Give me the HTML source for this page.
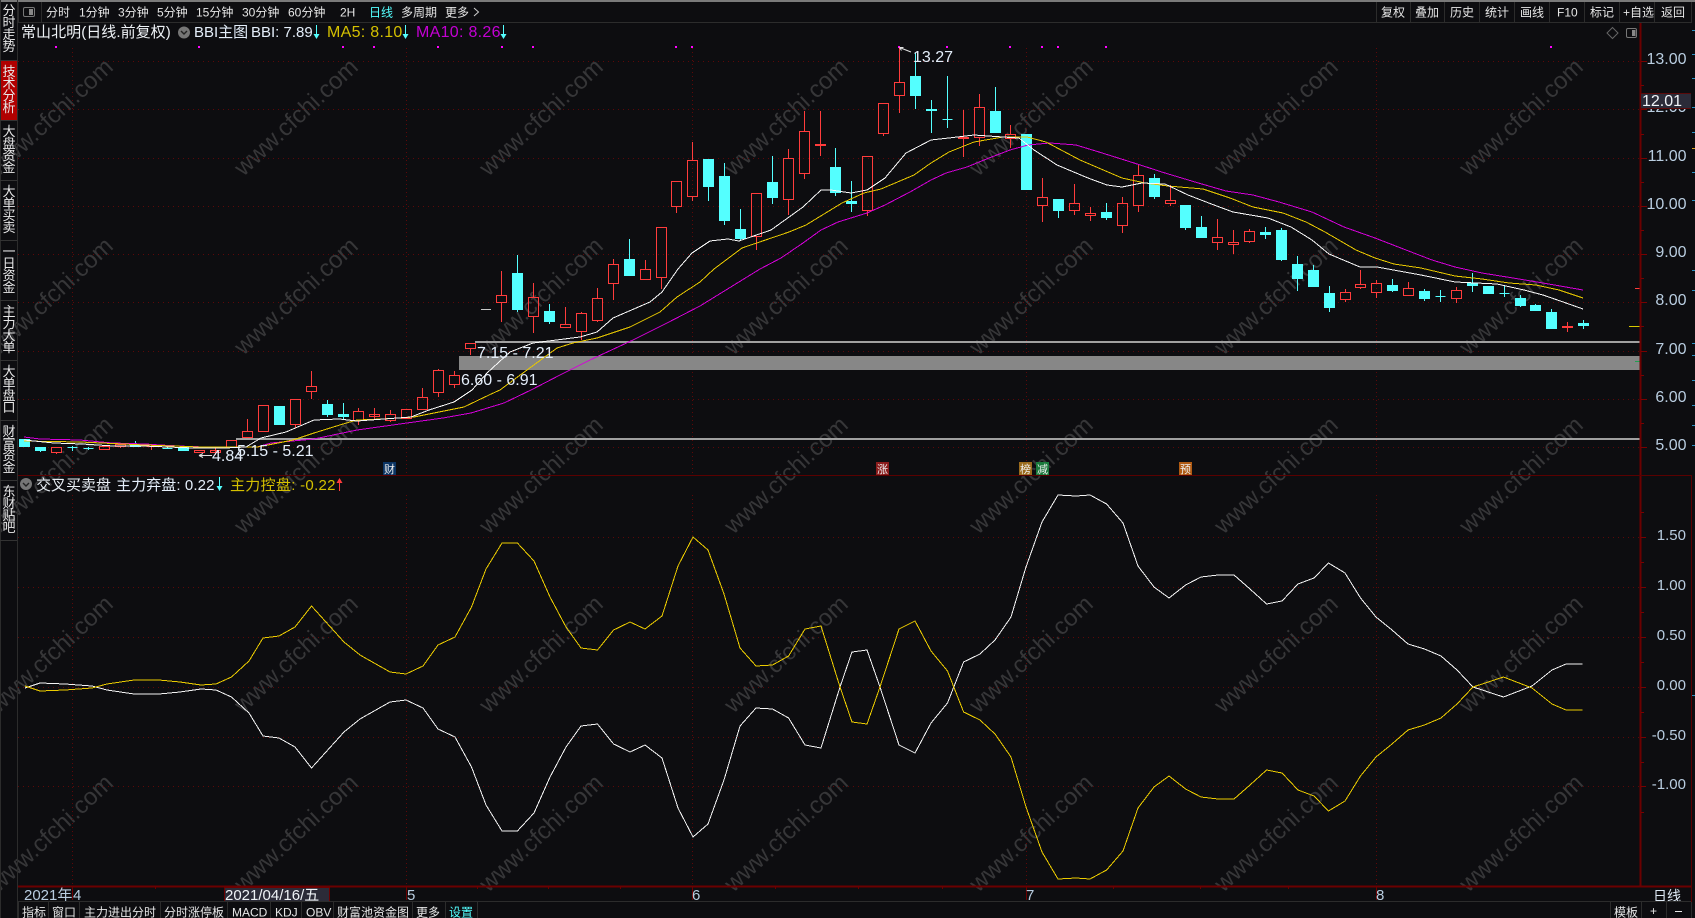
<!DOCTYPE html>
<html lang="zh"><head><meta charset="utf-8"><title>常山北明</title>
<style>
html,body{margin:0;padding:0;background:#0d0d10;width:1695px;height:918px;overflow:hidden}
svg{position:absolute;left:0;top:0;display:block}
svg text{font-family:"Liberation Sans","Noto Sans CJK SC",sans-serif}
.s{position:absolute;left:2px;width:14px;font:13px/12px "Liberation Sans","Noto Sans CJK SC",sans-serif;color:#e8e8e8;word-break:break-all;text-align:center}
.b{font-size:12px;fill:#e6e6e6}
.t{font-size:16px;fill:#e4eefa}
.a{font-size:16px;fill:#b9cde0;text-anchor:end}
.l{font-size:15px;fill:#b9cde0;text-anchor:end}
.w{font-size:24px;fill:#363638;text-anchor:middle}
polyline{shape-rendering:crispEdges}
</style></head><body>
<svg width="1695" height="918" viewBox="0 0 1695 918" xmlns="http://www.w3.org/2000/svg">
<rect width="1695" height="918" fill="#0d0d10"/>
<!-- watermarks -->
<g>
<text class="w" x="51" y="125" transform="rotate(-43 51 117)">www.cfchi.com</text>
<text class="w" x="296" y="125" transform="rotate(-43 296 117)">www.cfchi.com</text>
<text class="w" x="541" y="125" transform="rotate(-43 541 117)">www.cfchi.com</text>
<text class="w" x="786" y="125" transform="rotate(-43 786 117)">www.cfchi.com</text>
<text class="w" x="1031" y="125" transform="rotate(-43 1031 117)">www.cfchi.com</text>
<text class="w" x="1276" y="125" transform="rotate(-43 1276 117)">www.cfchi.com</text>
<text class="w" x="1521" y="125" transform="rotate(-43 1521 117)">www.cfchi.com</text>
<text class="w" x="51" y="304" transform="rotate(-43 51 296)">www.cfchi.com</text>
<text class="w" x="296" y="304" transform="rotate(-43 296 296)">www.cfchi.com</text>
<text class="w" x="541" y="304" transform="rotate(-43 541 296)">www.cfchi.com</text>
<text class="w" x="786" y="304" transform="rotate(-43 786 296)">www.cfchi.com</text>
<text class="w" x="1031" y="304" transform="rotate(-43 1031 296)">www.cfchi.com</text>
<text class="w" x="1276" y="304" transform="rotate(-43 1276 296)">www.cfchi.com</text>
<text class="w" x="1521" y="304" transform="rotate(-43 1521 296)">www.cfchi.com</text>
<text class="w" x="51" y="483" transform="rotate(-43 51 475)">www.cfchi.com</text>
<text class="w" x="296" y="483" transform="rotate(-43 296 475)">www.cfchi.com</text>
<text class="w" x="541" y="483" transform="rotate(-43 541 475)">www.cfchi.com</text>
<text class="w" x="786" y="483" transform="rotate(-43 786 475)">www.cfchi.com</text>
<text class="w" x="1031" y="483" transform="rotate(-43 1031 475)">www.cfchi.com</text>
<text class="w" x="1276" y="483" transform="rotate(-43 1276 475)">www.cfchi.com</text>
<text class="w" x="1521" y="483" transform="rotate(-43 1521 475)">www.cfchi.com</text>
<text class="w" x="51" y="662" transform="rotate(-43 51 654)">www.cfchi.com</text>
<text class="w" x="296" y="662" transform="rotate(-43 296 654)">www.cfchi.com</text>
<text class="w" x="541" y="662" transform="rotate(-43 541 654)">www.cfchi.com</text>
<text class="w" x="786" y="662" transform="rotate(-43 786 654)">www.cfchi.com</text>
<text class="w" x="1031" y="662" transform="rotate(-43 1031 654)">www.cfchi.com</text>
<text class="w" x="1276" y="662" transform="rotate(-43 1276 654)">www.cfchi.com</text>
<text class="w" x="1521" y="662" transform="rotate(-43 1521 654)">www.cfchi.com</text>
<text class="w" x="51" y="841" transform="rotate(-43 51 833)">www.cfchi.com</text>
<text class="w" x="296" y="841" transform="rotate(-43 296 833)">www.cfchi.com</text>
<text class="w" x="541" y="841" transform="rotate(-43 541 833)">www.cfchi.com</text>
<text class="w" x="786" y="841" transform="rotate(-43 786 833)">www.cfchi.com</text>
<text class="w" x="1031" y="841" transform="rotate(-43 1031 833)">www.cfchi.com</text>
<text class="w" x="1276" y="841" transform="rotate(-43 1276 833)">www.cfchi.com</text>
<text class="w" x="1521" y="841" transform="rotate(-43 1521 833)">www.cfchi.com</text>
</g>
<!-- grid -->
<path d="M18 61.5H1640M18 109.5H1640M18 158.5H1640M18 206.5H1640M18 254.5H1640M18 302.5H1640M18 351.5H1640M18 399.5H1640M18 447.5H1640M18 537.5H1640M18 587.5H1640M18 637.5H1640M18 687.5H1640M18 737.5H1640M18 786.5H1640" stroke="#5e0808" stroke-dasharray="1 4" fill="none"/>
<path d="M72.5 48V475M406.5 48V475M692.5 48V475M1026.5 48V475M1376.5 48V475M72.5 495V886M406.5 495V886M692.5 495V886M1026.5 495V886M1376.5 495V886" stroke="#5e0808" stroke-dasharray="1 3" fill="none"/>
<!-- magenta dots -->
<path d="M55 46h2v2h-2zM198 46h2v2h-2zM342 46h2v2h-2zM373 46h2v2h-2zM437 46h2v2h-2zM501 46h2v2h-2zM532 46h2v2h-2zM675 46h2v2h-2zM691 46h2v2h-2zM898 46h2v2h-2zM946 46h2v2h-2zM1009 46h2v2h-2zM1041 46h2v2h-2zM1057 46h2v2h-2zM1105 46h2v2h-2zM1550 46h2v2h-2z" fill="#ff00ff"/>
<!-- red candles -->
<path shape-rendering="crispEdges" fill="none" stroke="#ff3c3c" d="M56.5 452.5V454M51.5 447.5H61.5V452.5H51.5Z
M99.5 446.5H109.5V449.5H99.5Z
M120.5 446.5V448M115.5 444.5H125.5V446.5H115.5Z
M151.5 445V450M146.5 446.5H156.5
M194.5 450.5H204.5V452.5H194.5Z
M215.5 448V455M210.5 450.5H220.5V452.5H210.5Z
M226.5 440.5H236.5V447.5H226.5Z
M247.5 419V431.5M242.5 431.5H252.5V437.5H242.5Z
M258.5 405.5H268.5V431.5H258.5Z
M295.5 424.5V428M290.5 399.5H300.5V424.5H290.5Z
M311.5 371V386.5M311.5 391.5V399M306.5 386.5H316.5V391.5H306.5Z
M358.5 408V411.5M358.5 420.5V425M353.5 411.5H363.5V420.5H353.5Z
M374.5 408V420M369.5 414.5H379.5V416.5H369.5Z
M390.5 410V414.5M390.5 420.5V422M385.5 414.5H395.5V420.5H385.5Z
M401.5 409.5H411.5V418.5H401.5Z
M422.5 388V397.5M417.5 397.5H427.5V409.5H417.5Z
M438.5 369V370.5M438.5 392.5V397M433.5 370.5H443.5V392.5H433.5Z
M454.5 371V375.5M454.5 384.5V388M449.5 375.5H459.5V384.5H449.5Z
M470.5 348.5V355M465.5 343.5H475.5V348.5H465.5Z
M501.5 271V295.5M501.5 302.5V322M496.5 295.5H506.5V302.5H496.5Z
M533.5 283V297.5M533.5 316.5V333M528.5 297.5H538.5V316.5H528.5Z
M565.5 307V324.5M565.5 327.5V328M560.5 324.5H570.5V327.5H560.5Z
M581.5 312V313.5M581.5 331.5V340M576.5 313.5H586.5V331.5H576.5Z
M597.5 288V298.5M597.5 320.5V322M592.5 298.5H602.5V320.5H592.5Z
M613.5 259V264.5M613.5 283.5V300M608.5 264.5H618.5V283.5H608.5Z
M645.5 260V269.5M640.5 269.5H650.5V279.5H640.5Z
M661.5 277.5V289M656.5 227.5H666.5V277.5H656.5Z
M676.5 206.5V213M671.5 181.5H681.5V206.5H671.5Z
M692.5 142V160.5M692.5 196.5V201M687.5 160.5H697.5V196.5H687.5Z
M756.5 236.5V250M751.5 193.5H761.5V236.5H751.5Z
M788.5 149V158.5M788.5 199.5V215M783.5 158.5H793.5V199.5H783.5Z
M804.5 111V131.5M804.5 173.5V179M799.5 131.5H809.5V173.5H799.5Z
M820.5 111V156M815.5 144.5H825.5V145.5H815.5Z
M867.5 210.5V216M862.5 156.5H872.5V210.5H862.5Z
M883.5 133.5V136M878.5 103.5H888.5V133.5H878.5Z
M899.5 47V82.5M899.5 95.5V113M894.5 82.5H904.5V95.5H894.5Z
M963.5 110V157M958.5 137.5H968.5V138.5H958.5Z
M979.5 94V107.5M979.5 137.5V146M974.5 107.5H984.5V137.5H974.5Z
M1010.5 125V134.5M1010.5 138.5V148M1005.5 134.5H1015.5V138.5H1005.5Z
M1042.5 178V197.5M1042.5 205.5V222M1037.5 197.5H1047.5V205.5H1037.5Z
M1074.5 184V203.5M1074.5 210.5V215M1069.5 203.5H1079.5V210.5H1069.5Z
M1090.5 207V213.5M1090.5 215.5V221M1085.5 213.5H1095.5V215.5H1085.5Z
M1122.5 197V203.5M1122.5 225.5V233M1117.5 203.5H1127.5V225.5H1117.5Z
M1138.5 164V175.5M1138.5 205.5V212M1133.5 175.5H1143.5V205.5H1133.5Z
M1170.5 185V200.5M1170.5 203.5V206M1165.5 200.5H1175.5V203.5H1165.5Z
M1217.5 219V237.5M1217.5 242.5V250M1212.5 237.5H1222.5V242.5H1212.5Z
M1233.5 230V242.5M1233.5 244.5V254M1228.5 242.5H1238.5V244.5H1228.5Z
M1249.5 229V231.5M1249.5 241.5V243M1244.5 231.5H1254.5V241.5H1244.5Z
M1345.5 289V292.5M1345.5 299.5V302M1340.5 292.5H1350.5V299.5H1340.5Z
M1360.5 270V284.5M1360.5 287.5V289M1355.5 284.5H1365.5V287.5H1355.5Z
M1376.5 280V283.5M1376.5 292.5V298M1371.5 283.5H1381.5V292.5H1371.5Z
M1408.5 282V288.5M1403.5 288.5H1413.5V295.5H1403.5Z
M1456.5 287V290.5M1456.5 298.5V303M1451.5 290.5H1461.5V298.5H1451.5Z
M1567.5 322V332M1562.5 326.5H1572.5V327.5H1562.5Z"/>
<!-- cyan candles -->
<path shape-rendering="crispEdges" fill="#54ffff" stroke="#54ffff" d="M19.5 439.5H29.5V446.5H19.5Z
M40.5 447V452M35.5 447.5H45.5V450.5H35.5Z
M72.5 446V451M67.5 447.5H77.5
M88.5 447V450M83.5 448.5H93.5
M135.5 441V447M130.5 444.5H140.5V446.5H130.5Z
M167.5 446V449M162.5 448.5H172.5
M178.5 447.5H188.5V450.5H178.5Z
M279.5 424.5V425M274.5 406.5H284.5V424.5H274.5Z
M327.5 400V417M322.5 404.5H332.5V414.5H322.5Z
M343.5 403V419M338.5 414.5H348.5V416.5H338.5Z
M517.5 255V312M512.5 273.5H522.5V309.5H512.5Z
M549.5 304V324M544.5 311.5H554.5V321.5H544.5Z
M629.5 239V276M624.5 259.5H634.5V275.5H624.5Z
M708.5 186.5V201M703.5 159.5H713.5V186.5H703.5Z
M724.5 163V225M719.5 176.5H729.5V220.5H719.5Z
M740.5 209V241M735.5 229.5H745.5V238.5H735.5Z
M772.5 156V204M767.5 182.5H777.5V197.5H767.5Z
M835.5 148V196M830.5 167.5H840.5V192.5H830.5Z
M851.5 181V212M846.5 201.5H856.5V203.5H846.5Z
M915.5 53V109M910.5 76.5H920.5V95.5H910.5Z
M931.5 100V133M926.5 109.5H936.5V110.5H926.5Z
M947.5 76V128M942.5 119.5H952.5
M995.5 87V133M990.5 111.5H1000.5V132.5H990.5Z
M1021.5 134.5H1031.5V189.5H1021.5Z
M1058.5 199.5V218M1053.5 199.5H1063.5V210.5H1053.5Z
M1106.5 203V220M1101.5 212.5H1111.5V217.5H1101.5Z
M1154.5 174V199M1149.5 178.5H1159.5V196.5H1149.5Z
M1185.5 227.5V230M1180.5 205.5H1190.5V227.5H1180.5Z
M1201.5 216V238M1196.5 227.5H1206.5V237.5H1196.5Z
M1265.5 227V239M1260.5 232.5H1270.5V234.5H1260.5Z
M1281.5 228V261M1276.5 230.5H1286.5V259.5H1276.5Z
M1297.5 256V291M1292.5 264.5H1302.5V278.5H1292.5Z
M1313.5 265V287M1308.5 270.5H1318.5V286.5H1308.5Z
M1329.5 286V312M1324.5 293.5H1334.5V307.5H1324.5Z
M1392.5 279V292M1387.5 285.5H1397.5V290.5H1387.5Z
M1424.5 289V301M1419.5 291.5H1429.5V298.5H1419.5Z
M1440.5 290V302M1435.5 296.5H1445.5
M1472.5 273V292M1467.5 283.5H1477.5V285.5H1467.5Z
M1488.5 293.5V294M1483.5 286.5H1493.5V293.5H1483.5Z
M1504.5 285V297M1499.5 293.5H1509.5
M1520.5 295V307M1515.5 298.5H1525.5V305.5H1515.5Z
M1535.5 304V311M1530.5 305.5H1540.5V310.5H1530.5Z
M1551.5 309V329M1546.5 312.5H1556.5V328.5H1546.5Z
M1583.5 320V329M1578.5 323.5H1588.5V325.5H1578.5Z"/>
<path d="M481 309.5H491" stroke="#c8c8c8" shape-rendering="crispEdges"/>
<!-- support / resistance bands -->
<rect x="475" y="341" width="1165" height="2" fill="#a0a0a0"/>
<rect x="459" y="356" width="1181" height="14" fill="#878787"/>
<rect x="236" y="438" width="1404" height="2" fill="#a0a0a0"/>
<!-- MA lines -->
<polyline fill="none" stroke="#d400d8" points="24,437 40,439 80,440 112,443 145,444 160,445 193,446.7 225,447 257,447 271,443 314,439 357,430 407,423 443,418 471,413 504,403 531,390 560,375 590,360 633,340 667,323 700,306 760,269 781,258 803,243 821,230 838,222 867,213 885,205 910,192 931,180 946,173 967,167 989,158 1010,150 1028,145 1050,143 1076,145 1099,152 1134,163 1165,173 1195,182 1226,191 1253,195 1279,202 1312,212 1344,227 1375,238 1406,250 1432,260 1455,267 1482,273 1513,278 1543,283 1583,290"/>
<polyline fill="none" stroke="#e8c800" points="24,441 80,442 145,445 200,447 257,447 268,445 293,440 314,433 343,424 357,420 382,419 414,417 464,407 489,395 500,390 527,370 557,348 573,343 597,338 630,327 660,312 677,297 700,282 714,269 742,248 789,232 806,225 842,203 864,193 881,189 914,175 931,163 949,152 974,142 1003,137 1027,137 1046,142 1080,160 1122,178 1145,183 1168,186 1203,189 1230,198 1253,207 1283,213 1306,222 1325,232 1356,250 1375,258 1394,264 1421,268 1455,276 1482,279 1509,283 1536,285 1559,290 1583,298"/>
<polyline fill="none" stroke="#f8f8f8" points="24,440 54,443 82,444 114,446 143,446 193,448 225,448 246,447 261,438 286,432 314,420 339,419 357,421 411,417 429,410 454,402 472,390 487,373 510,352 533,343 580,337 597,332 613,318 650,302 662,292 678,269 692,253 710,241 728,239 739,241 771,230 803,207 821,190 831,190 851,193 867,190 885,178 906,153 931,140 949,138 974,135 1003,137 1019,138 1034,150 1057,165 1088,178 1107,185 1122,187 1142,183 1165,184 1188,195 1214,205 1233,212 1268,218 1291,227 1312,240 1329,254 1360,267 1377,267 1421,275 1455,282 1497,284 1524,290 1543,295 1566,303 1583,309"/>
<!-- lower pane lines -->
<polyline fill="none" stroke="#f4f4f4" points="25,688 40,683 65,684 92,686 107,690 134,694 159,694 180,692 201,689 216,690 231.5,697 249,713 263,736 279,738 295,747 311.5,768 344,732 360,719 390,702 406,700 423,708 438,729 455,737 471.5,767 486,805 502,831 517.4,831 534,813 550,777 566,747 581,726 597.5,724 613.6,744 630,752 645,745 662,758 678,808 693,837 708,824 724,780 740,726 756,708 772.5,709 788.6,718 805,745 821,748 840,687 852,652 867,650 880,687 899,745 915,753 931,723 947.5,703 963.6,662 980,654 995,640 1011,617 1026,567 1042,522 1058,495 1076,496 1090,495 1106.6,504 1123,523 1138,566 1154,587 1169,598 1185.6,585 1201,577 1218,575 1234,575 1250,589 1266.6,604 1282,601 1298,584 1314,578 1328.5,563 1345,573 1360.5,598 1376,617 1392,630 1408,644 1424.5,649 1441,656 1457,670 1473,687 1503.5,697 1532,686 1552,670 1566,664 1582.5,664"/>
<polyline fill="none" stroke="#eccc00" transform="matrix(1 0 0 -1 0 1374)" points="25,688 40,683 65,684 92,686 107,690 134,694 159,694 180,692 201,689 216,690 231.5,697 249,713 263,736 279,738 295,747 311.5,768 344,732 360,719 390,702 406,700 423,708 438,729 455,737 471.5,767 486,805 502,831 517.4,831 534,813 550,777 566,747 581,726 597.5,724 613.6,744 630,752 645,745 662,758 678,808 693,837 708,824 724,780 740,726 756,708 772.5,709 788.6,718 805,745 821,748 840,687 852,652 867,650 880,687 899,745 915,753 931,723 947.5,703 963.6,662 980,654 995,640 1011,617 1026,567 1042,522 1058,495 1076,496 1090,495 1106.6,504 1123,523 1138,566 1154,587 1169,598 1185.6,585 1201,577 1218,575 1234,575 1250,589 1266.6,604 1282,601 1298,584 1314,578 1328.5,563 1345,573 1360.5,598 1376,617 1392,630 1408,644 1424.5,649 1441,656 1457,670 1473,687 1503.5,697 1532,686 1552,670 1566,664 1582.5,664"/>
<!-- chart labels -->
<text class="t" x="477" y="358">7.15 - 7.21</text>
<text class="t" x="461" y="385">6.60 - 6.91</text>
<text class="t" x="237" y="456">5.15 - 5.21</text>
<text class="t" x="212" y="461">4.84</text>
<text class="t" x="913" y="62">13.27</text>
<path d="M199 455.5H212M199 455.5l4 -2M199 455.5l4 2M899.5 47.5L911 52M899.5 47.5l4 0M899.5 47.5l2 3" stroke="#e0e0e0" fill="none"/>
<!-- small tags -->
<rect x="383" y="462" width="13" height="13" fill="#0b3463"/><text x="384" y="473" font-size="11" fill="#eee">财</text>
<rect x="876" y="462" width="13" height="13" fill="#8a1c1c"/><text x="877" y="473" font-size="11" fill="#eee">涨</text>
<rect x="1019" y="462" width="13" height="13" fill="#9a6a1c"/><text x="1020" y="473" font-size="11" fill="#eee">榜</text>
<rect x="1036" y="462" width="13" height="13" fill="#1a7a3c"/><text x="1037" y="473" font-size="11" fill="#eee">减</text>
<rect x="1179" y="462" width="13" height="13" fill="#b05a12"/><text x="1180" y="473" font-size="11" fill="#eee">预</text>
<!-- right side price markers -->
<path d="M1635 288.5H1640" stroke="#ff3c3c"/><path d="M1629 326.5H1640" stroke="#d8c800"/><path d="M1635 361.5H1640" stroke="#20a050"/>
<!-- axes and frame -->
<path d="M1640.5 23V887" stroke="#6b0000" stroke-width="2" fill="none"/>
<path d="M17 475.5H1691" stroke="#5a0000" fill="none"/>
<path d="M17 886.5H1691" stroke="#6b0000" stroke-width="2" fill="none"/>
<path d="M1691.5 475V902" stroke="#5a0000" fill="none"/>
<path d="M1641 61.5h6M1641 85.5h3M1641 109.5h6M1641 134.5h3M1641 158.5h6M1641 182.5h3M1641 206.5h6M1641 230.5h3M1641 254.5h6M1641 278.5h3M1641 302.5h6M1641 326.5h3M1641 351.5h6M1641 375.5h3M1641 399.5h6M1641 423.5h3M1641 447.5h6M1641 537.5h5M1641 562.5h3M1641 587.5h5M1641 612.5h3M1641 637.5h5M1641 662.5h3M1641 687.5h5M1641 712.5h3M1641 737.5h5M1641 762.5h3M1641 786.5h5M1641 812.5h3M1641 512.5h3" stroke="#7a0000" fill="none"/>
<text class="a" x="1686.5" y="64">13.00</text>
<text class="a" x="1686.5" y="112">12.00</text>
<text class="a" x="1686.5" y="161">11.00</text>
<text class="a" x="1686.5" y="209">10.00</text>
<text class="a" x="1686.5" y="257">9.00</text>
<text class="a" x="1686.5" y="305">8.00</text>
<text class="a" x="1686.5" y="354">7.00</text>
<text class="a" x="1686.5" y="402">6.00</text>
<text class="a" x="1686.5" y="450">5.00</text>
<rect x="1641" y="93" width="50" height="16" fill="#2b2b38"/>
<path d="M1641 93.5H1691M1641 108.5H1691" stroke="#5a0a0a" fill="none"/>
<text x="1642" y="106" font-size="16" fill="#f0f4f8">12.01</text>
<text class="l" x="1686" y="540">1.50</text>
<text class="l" x="1686" y="590">1.00</text>
<text class="l" x="1686" y="640">0.50</text>
<text class="l" x="1686" y="690">0.00</text>
<text class="l" x="1686" y="740">-0.50</text>
<text class="l" x="1686" y="789">-1.00</text>
<!-- far right dashes -->
<path d="M1692 30.5h3M1692 54.5h3M1692 78.5h3M1692 107.5h3M1692 132.5h3M1692 172.5h3M1692 200.5h3M1692 270.5h3M1692 290.5h3M1692 343.5h3M1692 355.5h3M1692 380.5h3M1692 405.5h3M1692 425.5h3M1692 445.5h3M1692 695.5h3" stroke="#2a8fc0" fill="none"/>
<path d="M1692 148.5h3" stroke="#e0a020"/>
<!-- title row -->
<text x="21" y="37" font-size="15" letter-spacing=".05" fill="#eef2f6">常山北明(日线.前复权)</text>
<circle cx="184" cy="32.5" r="6" fill="#767676"/><path d="M181 31l3 3 3-3" stroke="#222" stroke-width="1.4" fill="none"/>
<text x="194" y="37" font-size="15" fill="#e4eefa">BBI主图</text>
<text x="251" y="37" font-size="15" fill="#e4eefa">BBI: 7.89</text>
<path d="M316.5 25V36" stroke="#54ffff"/><path d="M313.5 34h6l-3 5z" fill="#54ffff"/>
<text x="327" y="37" font-size="16" letter-spacing=".3" fill="#d4c000">MA5: 8.10</text>
<path d="M405.5 25V36" stroke="#54ffff"/><path d="M402.5 34h6l-3 5z" fill="#54ffff"/>
<text x="416" y="37" font-size="16" letter-spacing=".3" fill="#c400d4">MA10: 8.26</text>
<path d="M503.5 25V36" stroke="#54ffff"/><path d="M500.5 34h6l-3 5z" fill="#54ffff"/>
<path d="M1612.5 27.5l5.5 5.5-5.5 5.5-5.5-5.5z" stroke="#666" fill="none"/>
<rect x="1626.5" y="28.5" width="10" height="9" rx="1.5" stroke="#777" fill="none"/><rect x="1632" y="30" width="3.5" height="6" fill="#888"/>
<!-- lower pane title -->
<circle cx="26" cy="484" r="6" fill="#767676"/><path d="M23 483l3 3 3-3" stroke="#222" stroke-width="1.4" fill="none"/>
<text x="36" y="490" font-size="15" fill="#e8eef4">交叉买卖盘</text>
<text x="116" y="490" font-size="15" letter-spacing=".1" fill="#e4eefa">主力弃盘: 0.22</text>
<path d="M219.5 477V488" stroke="#54ffff"/><path d="M216.5 486h6l-3 5z" fill="#54ffff"/>
<text x="230" y="490" font-size="15" letter-spacing=".3" fill="#d4c000">主力控盘: -0.22</text>
<path d="M339.5 480V491" stroke="#ff3c3c"/><path d="M336.5 483h6l-3-5z" fill="#ff3c3c"/>
<!-- top bar -->
<rect x="0" y="0" width="1695" height="2" fill="#7a7a7a"/>
<path d="M18 22.5H1691" stroke="#2c2c2c" fill="none"/>
<path d="M18.5 2V23M41.5 2V23M1376.5 2V23M1410.5 2V23M1444.5 2V23M1479.5 2V23M1514.5 2V23M1549.5 2V23M1584.5 2V23M1619.5 2V23M1654.5 2V23M1691.5 2V23" stroke="#2c2c2c" fill="none"/>
<rect x="23.5" y="7.5" width="11" height="9" rx="1.5" stroke="#777" fill="none"/><rect x="29" y="9" width="4" height="6" fill="#888"/>
<text class="b" x="46" y="16.5">分时</text>
<text class="b" x="79" y="16.5">1分钟</text>
<text class="b" x="118" y="16.5">3分钟</text>
<text class="b" x="157" y="16.5">5分钟</text>
<text class="b" x="196" y="16.5">15分钟</text>
<text class="b" x="242" y="16.5">30分钟</text>
<text class="b" x="288" y="16.5">60分钟</text>
<text class="b" x="340" y="16.5">2H</text>
<text class="b" x="369" y="16.5" style="fill:#54ffff">日线</text>
<text class="b" x="401" y="16.5">多周期</text>
<text class="b" x="445" y="16.5">更多</text>
<path d="M474 8l4.5 4-4.5 4" stroke="#ccc" fill="none"/>
<text class="b" x="1381" y="16.5">复权</text>
<text class="b" x="1415" y="16.5">叠加</text>
<text class="b" x="1450" y="16.5">历史</text>
<text class="b" x="1485" y="16.5">统计</text>
<text class="b" x="1520" y="16.5">画线</text>
<text class="b" x="1557" y="16.5">F10</text>
<text class="b" x="1590" y="16.5">标记</text>
<text class="b" x="1623" y="16.5">+自选</text>
<text class="b" x="1661" y="16.5">返回</text>
<!-- date axis -->
<path d="M155.5 887v2M620.5 887v2M775.5 887v2M858.5 887v2M942.5 887v2M1113.5 887v2M1200.5 887v2M1288.5 887v2M477.5 887v2M548.5 887v2M72.5 887v13M406.5 887v13M692.5 887v13M1026.5 887v13M1376.5 887v13" stroke="#6b0000" fill="none"/>
<text x="24" y="900" font-size="15" fill="#b9cde0">2021年</text>
<text x="73" y="900" font-size="15" fill="#b9cde0">4</text>
<rect x="224.5" y="887.5" width="105" height="14" fill="#2b2b38" stroke="#6b0000"/>
<text x="225" y="900" font-size="15" fill="#eef2f6">2021/04/16/五</text>
<text x="407" y="900" font-size="15" fill="#b9cde0">5</text>
<text x="692" y="900" font-size="15" fill="#b9cde0">6</text>
<text x="1026" y="900" font-size="15" fill="#b9cde0">7</text>
<text x="1376" y="900" font-size="15" fill="#b9cde0">8</text>
<text x="1653" y="901" font-size="14" fill="#dfeaf5">日线</text>
<!-- bottom bar -->
<path d="M18 901.5H1691" stroke="#2c2c2c" fill="none"/>
<path d="M18.5 902V918M48.5 902V918M79.5 902V918M160.5 902V918M227.5 902V918M270.5 902V918M301.5 902V918M333.5 902V918M412.5 902V918M445.5 902V918M477.5 902V918M1610.5 902V918M1641.5 902V918M1666.5 902V918M1691.5 902V918" stroke="#2c2c2c" fill="none"/>
<text class="b" x="22" y="916.5">指标</text>
<text class="b" x="52" y="916.5">窗口</text>
<text class="b" x="84" y="916.5">主力进出分时</text>
<text class="b" x="164" y="916.5">分时涨停板</text>
<text class="b" x="232" y="916.5">MACD</text>
<text class="b" x="275" y="916.5">KDJ</text>
<text class="b" x="306" y="916.5">OBV</text>
<text class="b" x="337" y="916.5">财富池资金图</text>
<text class="b" x="416" y="916.5">更多</text>
<text class="b" x="449" y="916.5" style="fill:#54ffff">设置</text>
<text class="b" x="1614" y="916.5">模板</text>
<text class="b" x="1650" y="915">+</text>
<path d="M1675 911.5h7" stroke="#e6e6e6"/>
<!-- sidebar frame -->
<rect x="1" y="61" width="16" height="59" fill="#b00000"/>
<path d="M17.5 0V918M0.5 0V918" stroke="#2c2c2c" fill="none"/>
<path d="M0 60.5H17M0 120.5H17M0 180.5H17M0 240.5H17M0 300.5H17M0 360.5H17M0 420.5H17M0 480.5H17M0 540.5H17" stroke="#333" fill="none"/>
</svg>
<div class="s" style="top:5px">分时走势</div>
<div class="s" style="top:66px">技术分析</div>
<div class="s" style="top:126px">大盘资金</div>
<div class="s" style="top:186px">大单买卖</div>
<div class="s" style="top:246px">一日资金</div>
<div class="s" style="top:306px">主力大单</div>
<div class="s" style="top:366px">大单盘口</div>
<div class="s" style="top:426px">财富资金</div>
<div class="s" style="top:486px">东财贴吧</div>
</body></html>
